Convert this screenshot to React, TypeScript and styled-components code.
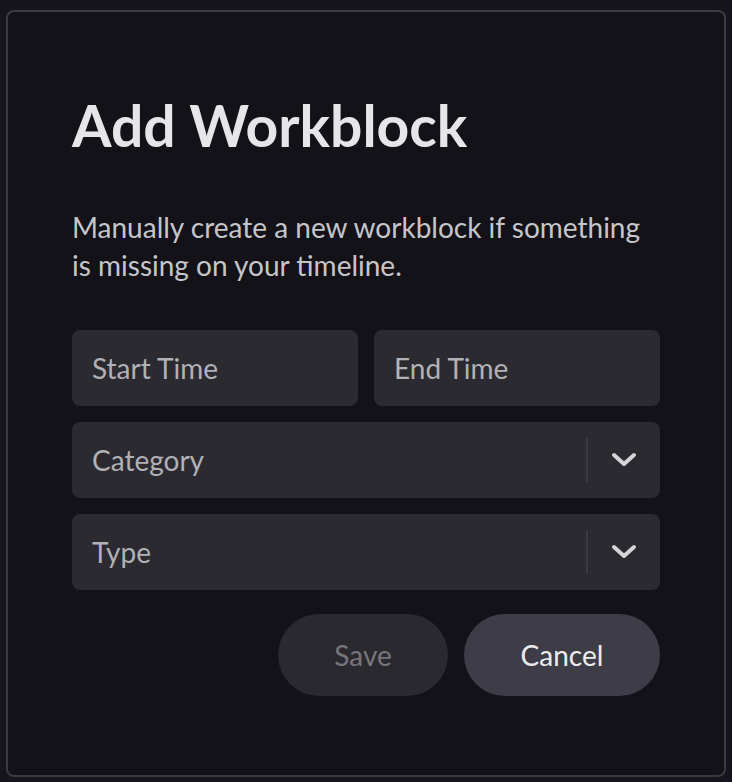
import React from "react";
import styled, { createGlobalStyle } from "styled-components";

const GlobalStyle = createGlobalStyle`
  html, body {
    margin: 0;
    padding: 0;
    background: #16151b;
  }
  body {
    font-family: Lato, "Noto Sans", sans-serif;
  }
`;

const Page = styled.div`
  width: 732px;
  height: 782px;
  box-sizing: border-box;
  padding: 10px 6px 5px 6px;
`;

const Dialog = styled.div`
  width: 720px;
  height: 767px;
  box-sizing: border-box;
  background: #131218;
  border: 2px solid #3b3a42;
  border-radius: 8px;
  padding: 79px 64px 0 64px;
  display: flex;
  flex-direction: column;
`;

const Title = styled.h1`
  margin: 0;
  font-size: 57px;
  line-height: 1.2;
  font-weight: 700;
  color: #e6e6e8;
`;

const Description = styled.p`
  margin: 49px 0 0 0;
  font-size: 28px;
  line-height: 38px;
  color: #c6c6ca;
  max-width: 575px;
`;

const Fields = styled.div`
  margin-top: 46px;
  display: flex;
  flex-direction: column;
  gap: 16px;
`;

const Row = styled.div`
  display: grid;
  grid-template-columns: 1fr 1fr;
  gap: 16px;
`;

const Field = styled.div`
  height: 76px;
  box-sizing: border-box;
  background: #2b2a31;
  border-radius: 8px;
  display: flex;
  align-items: center;
  padding-left: 20px;
  font-size: 28px;
  color: #b1b1b6;
`;

const SelectBox = styled(Field)`
  padding-right: 0;
`;

const SelectLabel = styled.span`
  flex: 1;
`;

const Indicator = styled.div`
  width: 72px;
  height: 44px;
  border-left: 2px solid #3b3a42;
  display: flex;
  align-items: center;
  justify-content: center;
`;

const Actions = styled.div`
  margin-top: 24px;
  display: flex;
  justify-content: flex-end;
  gap: 16px;
`;

const Button = styled.button<{ $primary?: boolean }>`
  height: 82px;
  width: ${({ $primary }) => ($primary ? "196px" : "170px")};
  border: none;
  border-radius: 41px;
  background: ${({ $primary }) => ($primary ? "#3e3c47" : "#2a292f")};
  color: ${({ $primary }) => ($primary ? "#ececee" : "#77767c")};
  font-family: Lato, "Noto Sans", sans-serif;
  font-size: 28px;
  padding: 0;
`;

const Chevron = () => (
  <svg width="26" height="16" viewBox="0 0 26 16" fill="none">
    <path
      d="M3 3 L13 12 L23 3"
      stroke="#d4d4d6"
      strokeWidth="4"
      strokeLinecap="round"
      strokeLinejoin="round"
    />
  </svg>
);

function Select({ label }: { label: string }) {
  return (
    <SelectBox>
      <SelectLabel>{label}</SelectLabel>
      <Indicator>
        <Chevron />
      </Indicator>
    </SelectBox>
  );
}

export default function App() {
  return (
    <>
      <GlobalStyle />
      <Page>
        <Dialog>
          <Title>Add Workblock</Title>
          <Description>
            Manually create a new workblock if something is missing on your
            timeline.
          </Description>
          <Fields>
            <Row>
              <Field>Start Time</Field>
              <Field>End Time</Field>
            </Row>
            <Select label="Category" />
            <Select label="Type" />
          </Fields>
          <Actions>
            <Button disabled>Save</Button>
            <Button $primary>Cancel</Button>
          </Actions>
        </Dialog>
      </Page>
    </>
  );
}
